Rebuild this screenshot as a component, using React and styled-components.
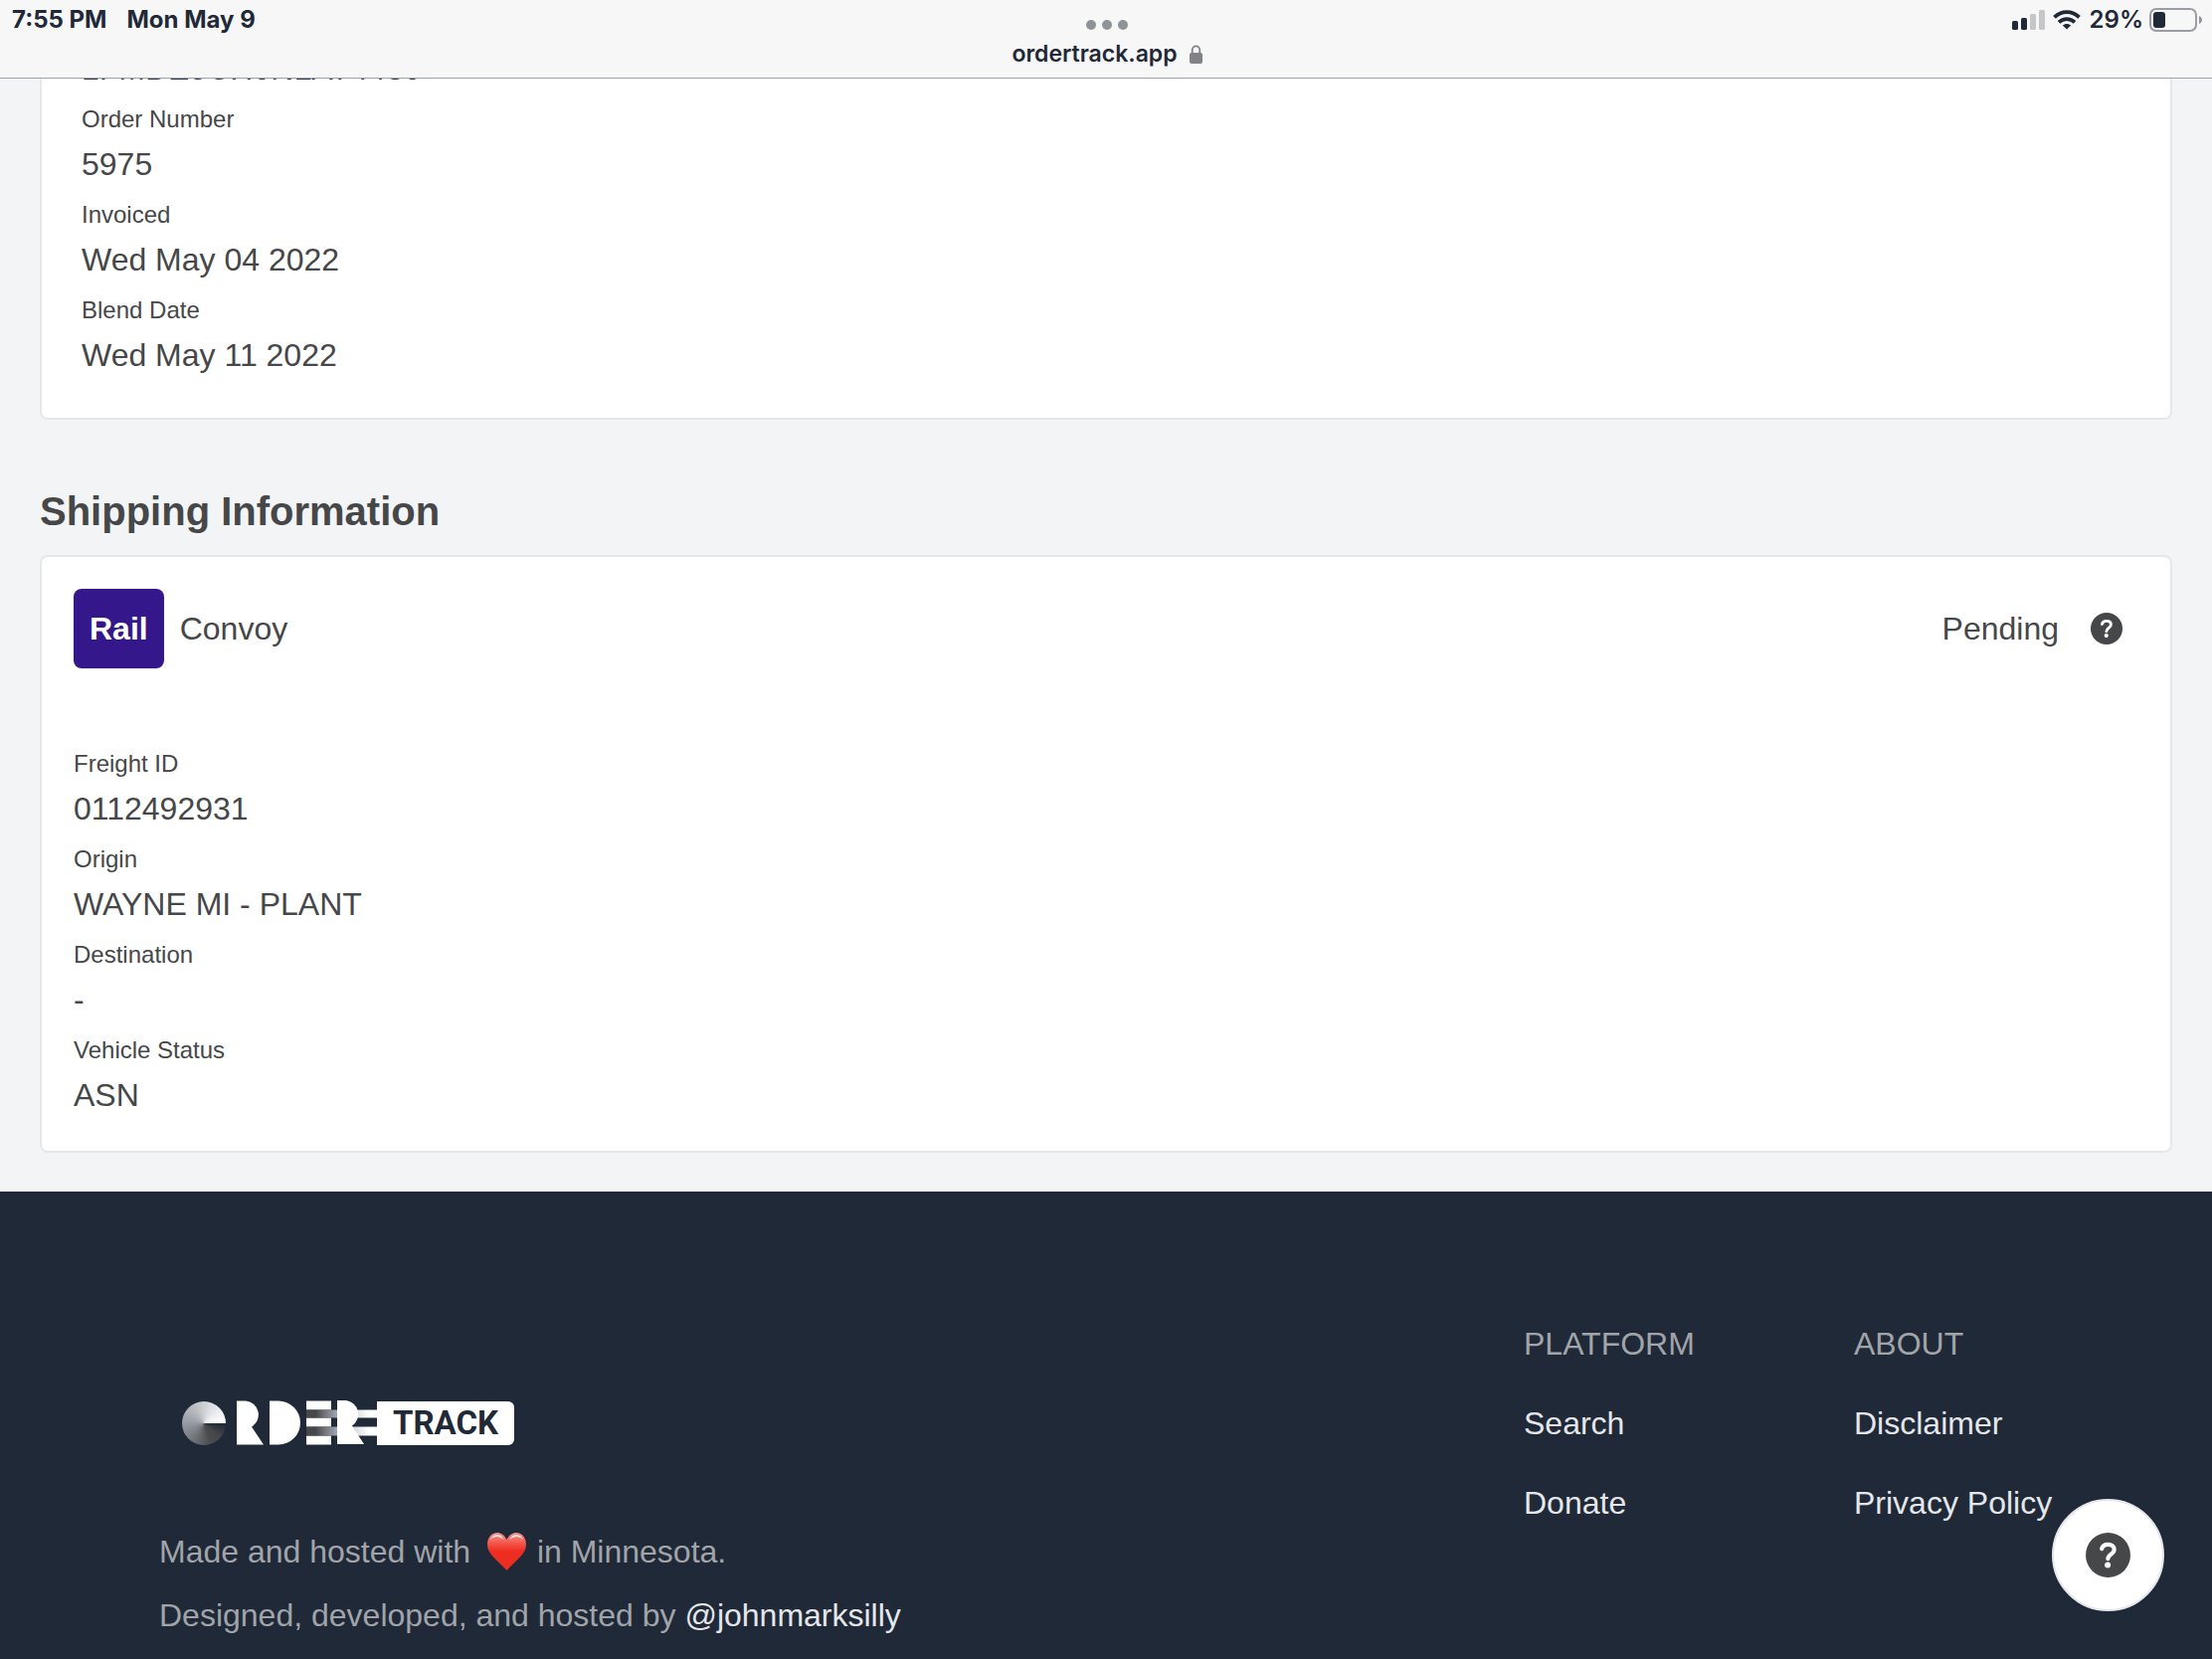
import React from 'react';
import styled, { createGlobalStyle } from 'styled-components';

const GlobalStyle = createGlobalStyle`
  * {
    box-sizing: border-box;
  }

  body {
    margin: 0;
    background: #f3f4f6;
    color: #464749;
    font-family: 'Liberation Sans', Arial, sans-serif;
    font-size: 32px;
    line-height: 48px;
  }

  h2, h3, p, dl, dd, ul {
    margin: 0;
    padding: 0;
  }
`;

const Page = styled.div`
  display: flex;
  flex-direction: column;
  min-height: 100vh;
`;

const StatusBar = styled.header`
  position: fixed;
  top: 0;
  left: 0;
  right: 0;
  z-index: 2;
  display: grid;
  grid-template-columns: 1fr auto 1fr;
  height: 79px;
  padding: 0 10px 0 12px;
  background: #f7f7f7;
  border-bottom: 1px solid #9ca3af;
  color: #1f2937;
  font-family: Inter, sans-serif;
  font-size: 24px;
  font-weight: 600;
  line-height: 40px;
`;

const Clock = styled.div`
  display: flex;
  gap: 20px;
  font-weight: 700;
`;

const AddressBar = styled.div`
  display: flex;
  flex-direction: column;
  align-items: center;
  padding-top: 20px;
`;

const Dots = styled.div`
  display: flex;
  gap: 6px;
`;

const Dot = styled.span`
  width: 10px;
  height: 10px;
  border-radius: 50%;
  background: #8f9297;
`;

const Address = styled.div`
  display: flex;
  align-items: center;
  gap: 12px;
  height: 40px;
  margin-top: 4px;
  font-size: 23px;
`;

const Indicators = styled.div`
  display: flex;
  align-items: center;
  justify-content: flex-end;
  height: 40px;
`;

const Percent = styled.span`
  margin: 0 6px 0 9px;
`;

const WifiSvg = styled.svg`
  margin-left: 8px;
`;

const Main = styled.main`
  padding: 0 40px 39px;
`;

const Card = styled.section`
  background: #fff;
  border: 2px solid #e5e7eb;
  border-radius: 8px;
  padding: 32px;
`;

const OrderCard = styled(Card)`
  border-top: 0;
  border-radius: 0 0 8px 8px;
  padding: 45px 40px 39px;
`;

const Vin = styled.p`
  margin-bottom: 8px;
  color: #2d3142;
`;

const Fields = styled.dl`
  display: flex;
  flex-direction: column;
  gap: 8px;
`;

const Label = styled.dt`
  margin-bottom: 2px;
  font-size: 24px;
  line-height: 38px;
`;

const Value = styled.dd`
  line-height: 48px;
`;

const SectionTitle = styled.h2`
  margin: 64px 0 16px;
  font-size: 40px;
  line-height: 56px;
`;

const ShipmentHeader = styled.div`
  display: flex;
  align-items: center;
  justify-content: space-between;
  margin-bottom: 77px;
  padding-right: 16px;
`;

const Carrier = styled.div`
  display: flex;
  align-items: center;
  gap: 16px;
`;

const Badge = styled.span`
  padding: 16px;
  border-radius: 8px;
  background: #34188b;
  color: #fff;
  font-weight: 700;
`;

const ShipmentStatus = styled.div`
  display: flex;
  align-items: center;
  gap: 32px;
`;

const IconButton = styled.button`
  display: flex;
  padding: 0;
  border: 0;
  background: none;
  color: #464749;
  cursor: pointer;
`;

const HelpButton = styled(IconButton)`
  position: fixed;
  right: 48px;
  bottom: 48px;
  align-items: center;
  justify-content: center;
  width: 113px;
  height: 113px;
  border: 2px solid #e5e7eb;
  border-radius: 50%;
  background: #fff;
`;

const Footer = styled.footer`
  flex: 1;
  display: flex;
  justify-content: space-between;
  padding: 129px 28px 20px 160px;
  background: #1f2937;
  color: #a1a4a9;
`;

const Brand = styled.div`
  display: flex;
  flex-direction: column;
  gap: 16px;
`;

const Logo = styled.div`
  display: flex;
  align-items: center;
  margin: 81px 23px 67px;
`;

const Disc = styled.span`
  width: 44px;
  height: 44px;
  border-radius: 50%;
  background: conic-gradient(
    from 90deg,
    #1f2937 0deg,
    #464749 40deg,
    #4a4b4e 70deg,
    #74767c 125deg,
    #9ca0a8 190deg,
    #c6c6c9 255deg,
    #d6d9df 285deg,
    #e9ecf1 320deg,
    #fff 360deg
  );
`;

const LogoLetters = styled.svg`
  margin-left: 11px;
`;

const LogoTag = styled.span`
  padding: 0 16px;
  border-radius: 0 6px 6px 0;
  background: #fff;
  color: #1f2937;
  font-family: Roboto, sans-serif;
  font-size: 33px;
  font-weight: 700;
  line-height: 44px;
`;

const HeartSvg = styled.svg`
  margin: 0 2px 0 8px;
  vertical-align: -8px;
`;

const FooterNav = styled.nav`
  display: grid;
  grid-template-columns: repeat(2, 332px);
`;

const ColumnTitle = styled.h3`
  font-size: 32px;
  font-weight: 500;
`;

const LinkList = styled.ul`
  display: flex;
  flex-direction: column;
  gap: 32px;
  margin-top: 32px;
  list-style: none;
`;

const FooterLink = styled.a`
  color: #e5e7eb;
  text-decoration: none;
`;

const orderFields = [
  ['Order Number', '5975'],
  ['Invoiced', 'Wed May 04 2022'],
  ['Blend Date', 'Wed May 11 2022'],
];

const shippingFields = [
  ['Freight ID', '0112492931'],
  ['Origin', 'WAYNE MI - PLANT'],
  ['Destination', '-'],
  ['Vehicle Status', 'ASN'],
];

const footerColumns = [
  { title: 'PLATFORM', links: ['Search', 'Donate'] },
  { title: 'ABOUT', links: ['Disclaimer', 'Privacy Policy'] },
];

const SignalIcon = () => (
  <svg width="33" height="20" viewBox="0 0 33 20" aria-hidden="true">
    <rect x="0" y="11" width="6" height="9" rx="1.5" fill="#1f2937" />
    <rect x="9" y="8" width="6" height="12" rx="1.5" fill="#1f2937" />
    <rect x="18" y="4" width="6" height="16" rx="1.5" fill="#c6c6c9" />
    <rect x="27" y="0" width="6" height="20" rx="1.5" fill="#c6c6c9" />
  </svg>
);

const WifiIcon = () => (
  <WifiSvg width="28" height="20" viewBox="0 0 28 20" fill="none" stroke="#1f2937" strokeWidth="3.8" aria-hidden="true">
    <path d="M1.5 7.4C8.5 0.4 19.5 0.4 26.5 7.4" />
    <path d="M6 12.4C10.5 8 17.5 8 22 12.4" />
    <path d="M14 19.6L9.8 15.5C12.2 13.4 15.8 13.4 18.2 15.5Z" fill="#1f2937" stroke="none" />
  </WifiSvg>
);

const BatteryIcon = () => (
  <svg width="53" height="24" viewBox="0 0 53 24" aria-hidden="true">
    <rect x="1" y="1" width="46" height="22" rx="6" fill="none" stroke="#9a9da3" strokeWidth="2" />
    <rect x="4" y="4" width="12" height="16" rx="3" fill="#1f2937" />
    <path d="M50 8C52 9 53 10.5 53 12S52 15 50 16Z" fill="#8f9297" />
  </svg>
);

const LockIcon = () => (
  <svg width="13" height="19" viewBox="0 0 13 19" aria-hidden="true">
    <path d="M2.7 9V5.4a3.8 4 0 0 1 7.6 0V9" fill="none" stroke="#808288" strokeWidth="1.8" />
    <rect x="0" y="8" width="13" height="11" rx="2" fill="#808288" />
  </svg>
);

const HelpIcon = ({ size }) => (
  <svg width={size} height={size} viewBox="0 0 24 24" aria-hidden="true">
    <circle cx="12" cy="12" r="12" fill="currentColor" />
    <path
      d="M8.6 8.6C9 7 10.3 6.3 12 6.3C13.9 6.3 15.3 7.3 15.3 9C15.3 11.4 11.9 11.6 11.9 14"
      fill="none"
      stroke="#fff"
      strokeWidth="2.2"
      strokeLinecap="round"
    />
    <circle cx="11.8" cy="17.3" r="1.6" fill="#fff" />
  </svg>
);

const HeartIcon = () => (
  <HeartSvg width="39" height="38" viewBox="0 0 39 38" role="img" aria-label="love">
    <defs>
      <linearGradient id="heart" x1="0" y1="0" x2="0" y2="1">
        <stop offset="0" stopColor="#f8948c" />
        <stop offset="0.35" stopColor="#f2473b" />
        <stop offset="0.5" stopColor="#ec2d20" />
        <stop offset="1" stopColor="#ec2d20" />
      </linearGradient>
    </defs>
    <path
      d="M19.5 7C17 2 13.5 0 10 0C4 0 0 5 0 12C0 22 11 28 19.5 38C28 28 39 22 39 12C39 5 35 0 29 0C25.5 0 22 2 19.5 7Z"
      fill="url(#heart)"
    />
    <path d="M3 7C4.5 3 8 1.5 11 2C14 2.5 16 5 16.5 7C12 3 7 3 3 7Z" fill="#fde4e2" />
    <path d="M22.5 7C23 5 25 2.5 28 2C31 1.5 34.5 3 36 7C32 3 27 3 22.5 7Z" fill="#fde4e2" />
  </HeartSvg>
);

const OrderLetters = () => (
  <LogoLetters width="141" height="45" viewBox="55 -0.5 141 45" aria-hidden="true">
    <defs>
      <linearGradient id="stripe" gradientUnits="userSpaceOnUse" x1="125" y1="0" x2="188" y2="0">
        <stop offset="0" stopColor="#464749" />
        <stop offset="0.15" stopColor="#464749" />
        <stop offset="0.3" stopColor="#74767c" />
        <stop offset="0.5" stopColor="#a4a9b3" />
        <stop offset="0.85" stopColor="#e5e7eb" />
        <stop offset="1" stopColor="#fff" />
      </linearGradient>
    </defs>
    <g fill="#fff">
      <path d="M55 0H64A14 14 0 0 1 70 26L82 44H55Z" />
      <path d="M88 0H97A22 22 0 0 1 97 44H88Z" />
      <path d="M125 0H150V9H125ZM125 17H150V26H125ZM125 35H150V44H125Z" />
      <path d="M125 9H197V17H125ZM125 26H197V35H125Z" fill="url(#stripe)" />
      <path d="M156 -0.5H165A14 14 0 0 1 171 25L183 43.5H156Z" />
    </g>
  </LogoLetters>
);

const FieldList = ({ fields }) => (
  <Fields>
    {fields.map(([label, value]) => (
      <div key={label}>
        <Label>{label}</Label>
        <Value>{value}</Value>
      </div>
    ))}
  </Fields>
);

const App = () => {
  return (
    <Page>
      <GlobalStyle />
      <StatusBar>
        <Clock>
          <span>7:55 PM</span>
          <span>Mon May 9</span>
        </Clock>
        <AddressBar>
          <Dots>
            <Dot />
            <Dot />
            <Dot />
          </Dots>
          <Address>
            ordertrack.app
            <LockIcon />
          </Address>
        </AddressBar>
        <Indicators>
          <SignalIcon />
          <WifiIcon />
          <Percent>29%</Percent>
          <BatteryIcon />
        </Indicators>
      </StatusBar>

      <Main>
        <OrderCard>
          <Vin>1FMDE5CH0NLA74430</Vin>
          <FieldList fields={orderFields} />
        </OrderCard>

        <SectionTitle>Shipping Information</SectionTitle>
        <Card>
          <ShipmentHeader>
            <Carrier>
              <Badge>Rail</Badge>
              Convoy
            </Carrier>
            <ShipmentStatus>
              Pending
              <IconButton type="button" aria-label="About this status">
                <HelpIcon size={32} />
              </IconButton>
            </ShipmentStatus>
          </ShipmentHeader>
          <FieldList fields={shippingFields} />
        </Card>
      </Main>

      <Footer>
        <Brand>
          <Logo>
            <Disc />
            <OrderLetters />
            <LogoTag>TRACK</LogoTag>
          </Logo>
          <p>
            Made and hosted with <HeartIcon /> in Minnesota.
          </p>
          <p>
            Designed, developed, and hosted by <FooterLink href="#johnmarksilly">@johnmarksilly</FooterLink>
          </p>
        </Brand>
        <FooterNav>
          {footerColumns.map(({ title, links }) => (
            <div key={title}>
              <ColumnTitle>{title}</ColumnTitle>
              <LinkList>
                {links.map((link) => (
                  <li key={link}>
                    <FooterLink href="#">{link}</FooterLink>
                  </li>
                ))}
              </LinkList>
            </div>
          ))}
        </FooterNav>
      </Footer>

      <HelpButton type="button" aria-label="Help">
        <HelpIcon size={45} />
      </HelpButton>
    </Page>
  );
};

export default App;
